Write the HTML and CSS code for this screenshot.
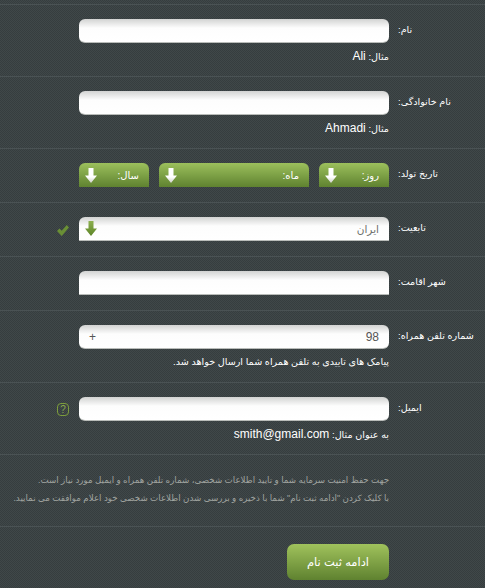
FILE: index.html
```html
<!DOCTYPE html>
<html lang="fa">
<head>
<meta charset="utf-8">
<title>ثبت نام</title>
<link rel="stylesheet" href="styles.css">
</head>
<body>
<svg class="defs" width="0" height="0" aria-hidden="true">
  <defs>
    <linearGradient id="arrow-white" x1="0" y1="0" x2="0" y2="1"><stop offset="0" stop-color="#ffffff"/><stop offset="0.6" stop-color="#ffffff"/><stop offset="1" stop-color="#c9cdc4"/></linearGradient>
    <linearGradient id="arrow-green" x1="0" y1="0" x2="0" y2="1"><stop offset="0" stop-color="#8db04e"/><stop offset="1" stop-color="#5d8428"/></linearGradient>
    <symbol id="arrow" viewBox="0 0 12 15"><path d="M3.5 0h5v7.5H12L6 15 0 7.5h3.5z"/></symbol>
  </defs>
</svg>
<form class="form">
  <div class="row tall">
    <div class="side"></div>
    <div class="main">
      <input class="field" type="text">
      <p class="hint">مثال: <b>Ali</b></p>
    </div>
    <label class="label">نام:</label>
  </div>
  <div class="row tall">
    <div class="side"></div>
    <div class="main">
      <input class="field" type="text">
      <p class="hint">مثال: <b>Ahmadi</b></p>
    </div>
    <label class="label">نام خانوادگی:</label>
  </div>
  <div class="row">
    <div class="side"></div>
    <div class="main dates">
      <div class="pick small"><span>روز:</span><svg class="arrow white"><use href="#arrow"/></svg></div>
      <div class="pick wide"><span>ماه:</span><svg class="arrow white"><use href="#arrow"/></svg></div>
      <div class="pick small"><span>سال:</span><svg class="arrow white"><use href="#arrow"/></svg></div>
    </div>
    <label class="label">تاریخ تولد:</label>
  </div>
  <div class="row">
    <div class="side">
      <svg class="status" viewBox="0 0 12 12"><path d="M0 7l2.5-2.5 2.2 2.2L9.8 1 12 3.5 4.7 12z"/></svg>
    </div>
    <div class="main">
      <div class="field square"><span class="country">ایران</span><svg class="arrow green"><use href="#arrow"/></svg></div>
    </div>
    <label class="label">تابعیت:</label>
  </div>
  <div class="row">
    <div class="side"></div>
    <div class="main"><input class="field square" type="text"></div>
    <label class="label">شهر اقامت:</label>
  </div>
  <div class="row tall">
    <div class="side"></div>
    <div class="main">
      <div class="field phone"><span class="num">98</span><span class="plus">+</span></div>
      <p class="hint">پیامک های تاییدی به تلفن همراه شما ارسال خواهد شد.</p>
    </div>
    <label class="label">شماره تلفن همراه:</label>
  </div>
  <div class="row tall">
    <div class="side"><span class="help">?</span></div>
    <div class="main">
      <input class="field" type="text">
      <p class="hint">به عنوان مثال: <b>smith@gmail.com</b></p>
    </div>
    <label class="label">ایمیل:</label>
  </div>
  <div class="row tall note">
    <div class="side"></div>
    <div class="main wide-note">
      <p>جهت حفظ امنیت سرمایه شما و تایید اطلاعات شخصی، شماره تلفن همراه و ایمیل مورد نیاز است.</p>
      <p>با کلیک کردن "ادامه ثبت نام" شما با ذخیره و بررسی شدن اطلاعات شخصی خود اعلام موافقت می نمایید.</p>
    </div>
    <div class="label"></div>
  </div>
  <div class="row submit">
    <div class="side"></div>
    <div class="main"><button class="go" type="button">ادامه ثبت نام</button></div>
    <div class="label"></div>
  </div>
</form>
</body>
</html>
```
FILE: styles.css
```css
* { box-sizing: border-box; }
html, body { margin: 0; padding: 0; height: 588px; overflow: hidden; }
body {
  width: 485px;
  background-color: #3b4344;
  background-image: conic-gradient(#404849 25%, #363d3f 0 50%, #404849 0 75%, #363d3f 0);
  background-size: 2px 2px;
  font-family: "Liberation Sans", "DejaVu Sans", sans-serif;
  font-size: 9.6px;
  color: #fff;
}
.defs { position: absolute; }
.form { padding-top: 4px; }
.row {
  display: grid;
  grid-template-columns: 79px 310px 96px;
  height: 54px;
  padding-top: 14px;
  border-top: 1px solid #4a5254;
}
.row.tall { height: 72px; }
.side { display: flex; justify-content: flex-start; padding: 6px 0 0 57px; }
.main { direction: rtl; min-width: 0; }
.label {
  padding: 4px 0 0 9px;
  direction: rtl;
  text-align: left;
  font-size: 9.6px;
  line-height: 14px;
  white-space: nowrap;
  color: #fff;
}
.field {
  display: block;
  width: 310px;
  height: 24px;
  border: 0;
  border-bottom: 1px solid #b9bcb9;
  border-radius: 6px;
  background: linear-gradient(#d2d3d2, #fdfdfd 9px, #fff);
  padding: 0;
  margin: 0;
}
.field.square { border-radius: 6px 6px 0 0; }
.hint {
  margin: 6px 0 0;
  line-height: 14px;
  font-size: 9.6px;
  text-align: right;
  white-space: nowrap;
}
.hint b { font-weight: normal; font-size: 12px; }
.dates { display: flex; gap: 10px; }
.pick {
  height: 24px;
  display: flex;
  justify-content: space-between;
  align-items: center;
  padding: 0 10px 0 6px;
  border-radius: 6px 6px 0 0;
  background: linear-gradient(#9cc05c, #5f8230);
  color: #fff;
  font-size: 10px;
}
.pick.small { width: 70px; }
.pick.wide { width: 150px; }
.arrow { width: 12px; height: 15px; display: block; }
.arrow.white { fill: url(#arrow-white); }
.arrow.green { fill: url(#arrow-green); }
.field:has(.arrow) {
  display: flex;
  justify-content: space-between;
  align-items: center;
  padding: 0 10px 0 6px;
  color: #6d706d;
  font-size: 10.5px;
}
.status { width: 12px; height: 12px; fill: #6a8f35; display: block; margin-top: 1px; }
.help {
  display: block;
  width: 12px;
  height: 13px;
  border: 1px solid #7c9c3c;
  border-radius: 4px;
  color: #8aa84a;
  font-size: 10px;
  line-height: 11px;
  text-align: center;
}
.phone {
  display: flex;
  justify-content: space-between;
  align-items: center;
  padding: 0 10px;
  color: #555;
}
.num { font-size: 12px; }
.plus { font-size: 12px; }
.note { padding-top: 16px; }
.wide-note { color: #a0a4a0; font-size: 8.7px; line-height: 18px; }
.wide-note p { margin: 0; white-space: nowrap; }
.submit { padding-top: 17px; height: 62px; }
.go {
  display: block;
  width: 102px;
  height: 36px;
  border: 0;
  border-radius: 7px;
  background: linear-gradient(#a0c25c, #5f8230);
  color: #fff;
  font: 11.5px "Liberation Sans", "DejaVu Sans", sans-serif;
  padding: 0;
}
```
